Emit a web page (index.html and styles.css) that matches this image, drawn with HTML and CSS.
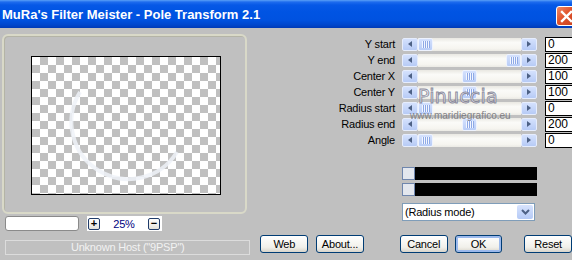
FILE: index.html
```html
<!DOCTYPE html>
<html lang="en">
<head>
    <meta charset="UTF-8">
    <title>MuRa's Filter Meister - Pole Transform 2.1</title>
    <link rel="stylesheet" href="styles.css">
</head>
<body>

    <div class="titlebar">
        <span class="title">MuRa's Filter Meister - Pole Transform 2.1</span>
        <span class="close-btn">
            <svg width="19" height="19" viewBox="0 0 19 19"><path d="M5 5 L14 14 M14 5 L5 14" stroke="#fff" stroke-width="2.4" stroke-linecap="square"/></svg>
        </span>
    </div>

    <div class="main">
        <div class="left">
            <div class="preview-frame">
                <div class="canvas">
                    <svg class="ghost" width="188" height="137" viewBox="0 0 188 137">
                        <path d="M48 35 A57 57 0 1 0 145 95" fill="none" stroke="#eef2f8" stroke-width="4" opacity="0.85"/>
                    </svg>
                </div>
            </div>
            <div class="zoom-row">
                <input class="zoom-field" type="text">
                <div class="zoom-box">
                    <span class="mini-btn">+</span>
                    <span class="zoom-value">25%</span>
                    <span class="mini-btn">&minus;</span>
                </div>
            </div>
        </div>

        <div class="right">
            <div class="sliders">
                <label>Y start</label>
                <div class="slider"><span class="arrow arrow-left"></span><span class="track"><span class="thumb" style="--pos: 0"></span></span><span class="arrow arrow-right"></span></div>
                <div class="value">0</div>

                <label>Y end</label>
                <div class="slider"><span class="arrow arrow-left"></span><span class="track"><span class="thumb" style="--pos: 1"></span></span><span class="arrow arrow-right"></span></div>
                <div class="value">200</div>

                <label>Center X</label>
                <div class="slider"><span class="arrow arrow-left"></span><span class="track"><span class="thumb" style="--pos: 0.5"></span></span><span class="arrow arrow-right"></span></div>
                <div class="value">100</div>

                <label>Center Y</label>
                <div class="slider"><span class="arrow arrow-left"></span><span class="track"><span class="thumb" style="--pos: 0.5"></span></span><span class="arrow arrow-right"></span></div>
                <div class="value">100</div>

                <label>Radius start</label>
                <div class="slider"><span class="arrow arrow-left"></span><span class="track"><span class="thumb" style="--pos: 0"></span></span><span class="arrow arrow-right"></span></div>
                <div class="value">0</div>

                <label>Radius end</label>
                <div class="slider"><span class="arrow arrow-left"></span><span class="track"><span class="thumb" style="--pos: 0.5"></span></span><span class="arrow arrow-right"></span></div>
                <div class="value">200</div>

                <label>Angle</label>
                <div class="slider"><span class="arrow arrow-left"></span><span class="track"><span class="thumb" style="--pos: 0"></span></span><span class="arrow arrow-right"></span></div>
                <div class="value">0</div>
            </div>

            <div class="colors">
                <div class="color-bar"><span class="swatch"></span></div>
                <div class="color-bar"><span class="swatch"></span></div>
            </div>

            <div class="select">
                <span class="select-text">(Radius mode)</span>
                <span class="select-btn">
                    <svg width="9" height="6" viewBox="0 0 9 6"><path d="M1 1 L4.5 4.5 L8 1" fill="none" stroke="#4d6185" stroke-width="2"/></svg>
                </span>
            </div>

            <div class="watermark">
                <span class="wm-name">Pinuccia</span>
                <span class="wm-url">www.maridiegrafico.eu</span>
            </div>
        </div>
    </div>

    <div class="bottom">
        <div class="status">Unknown Host ("9PSP")</div>
        <button class="btn btn-web">Web</button>
        <button class="btn btn-about">About...</button>
        <button class="btn btn-cancel">Cancel</button>
        <button class="btn btn-ok">OK</button>
        <button class="btn btn-reset">Reset</button>
    </div>

</body>
</html>
```

FILE: styles.css
```css
body {
    margin: 0;
    width: 572px;
    height: 260px;
    overflow: hidden;
    background-color: #c0c0c0;
    font-family: "Liberation Sans", Arial, sans-serif;
    font-size: 11px;
    color: #000;
}

/* title bar */
.titlebar {
    height: 28px;
    display: flex;
    align-items: flex-start;
    padding-left: 2px;
    background: linear-gradient(#5aa0f7 0, #1e6cee 2px, #0658e6 5px, #0054e3 12px, #0052e0 20px, #0046cc 25px, #003ab6 28px);
    color: #fff;
}
.title {
    font-size: 13px;
    font-weight: bold;
    margin-top: 7px;
}
.close-btn {
    margin-left: auto;
    margin-right: -5px;
    margin-top: 6px;
    width: 21px;
    height: 20px;
    box-sizing: border-box;
    border: 1px solid #fff;
    border-radius: 3px;
    background: linear-gradient(135deg, #f08a66, #e0532c 45%, #c8401c);
    display: flex;
    align-items: center;
    justify-content: center;
}

.main {
    display: flex;
    height: 204px;
}

/* left side: preview */
.left {
    width: 250px;
    padding-left: 2px;
    box-sizing: border-box;
}
.preview-frame {
    margin-top: 6px;
    width: 245px;
    height: 180px;
    box-sizing: border-box;
    border: 2px solid #d9d9c8;
    border-radius: 6px;
    box-shadow: inset 1px 1px 0 #b4b4a6;
    padding: 20px 0 0 27px;
}
.canvas {
    position: relative;
    width: 188px;
    height: 137px;
    border: 1px solid #000;
    background: conic-gradient(#c0c0c0 0 25%, #fff 0 50%, #c0c0c0 0 75%, #fff 0) 0 0 / 16px 16px;
}
.ghost {
    position: absolute;
    left: 0;
    top: 0;
}
.zoom-row {
    margin-top: 2px;
    display: flex;
    align-items: center;
}
.zoom-field {
    margin: 0 0 0 3px;
    width: 74px;
    height: 15px;
    box-sizing: border-box;
    border: 1px solid #8a8a8a;
    border-radius: 3px;
    background: #fff;
    padding: 0;
}
.zoom-box {
    margin-left: 8px;
    width: 75px;
    height: 15px;
    background: #fff;
    display: flex;
    align-items: center;
    padding-left: 1px;
    box-sizing: border-box;
}
.mini-btn {
    width: 12px;
    height: 12px;
    box-sizing: border-box;
    border: 1px solid #1f3b6a;
    border-radius: 2px;
    background: linear-gradient(#fff, #e4e3dc);
    font-size: 11px;
    font-weight: bold;
    line-height: 9px;
    text-align: center;
}
.zoom-value {
    width: 48px;
    text-align: center;
    color: #000080;
    letter-spacing: -0.2px;
}

/* right side: sliders */
.right {
    flex: 1;
    position: relative;
    padding-top: 8px;
}
.sliders {
    display: grid;
    grid-template-columns: 152px 143px 1fr;
    grid-auto-rows: 16px;
    align-items: center;
}
.sliders label {
    text-align: right;
    padding-right: 7px;
    white-space: nowrap;
    letter-spacing: -0.2px;
}
.slider {
    width: 135px;
    height: 13px;
    display: flex;
}
.arrow {
    width: 16px;
    height: 13px;
    box-sizing: border-box;
    border: 1px solid #e6edfd;
    border-radius: 2px;
    background: linear-gradient(#d4e1fd, #b7cbf6);
    display: flex;
    align-items: center;
    justify-content: center;
}
.arrow::before {
    content: "";
    border-style: solid;
}
.arrow-left::before {
    border-width: 3.5px 4px 3.5px 0;
    border-color: transparent #4d6185 transparent transparent;
}
.arrow-right::before {
    border-width: 3.5px 0 3.5px 4px;
    border-color: transparent transparent transparent #4d6185;
}
.track {
    flex: 1;
    position: relative;
    background: linear-gradient(#e9e8e2, #fbfbf8 35%, #f6f5f0 80%, #ebeae4);
}
.thumb {
    position: absolute;
    top: 0;
    left: calc((100% - 15px) * var(--pos));
    width: 15px;
    height: 13px;
    box-sizing: border-box;
    border: 1px solid #eef3fe;
    border-radius: 2px;
    background: repeating-linear-gradient(90deg, #f2f6ff 0 1px, #8ea9e6 1px 2px) center / 8px 7px no-repeat, linear-gradient(#d4e1fd, #b9cdf7);
}
.value {
    height: 15px;
    box-sizing: border-box;
    border: 1px solid #000;
    border-right: none;
    background: #fff;
    padding-left: 2px;
    line-height: 13px;
    font-size: 12px;
}

.colors {
    margin: 19px 0 0 152px;
}
.color-bar {
    width: 135px;
    height: 13px;
    background: #000;
    display: flex;
}
.color-bar + .color-bar {
    margin-top: 3px;
}
.swatch {
    width: 13px;
    height: 13px;
    box-sizing: border-box;
    border: 1px solid #6f86ad;
    background: #e3e7ee;
}

.select {
    margin: 7px 0 0 152px;
    width: 133px;
    height: 18px;
    box-sizing: border-box;
    border: 1px solid #7f9db9;
    background: #fff;
    display: flex;
    align-items: center;
}
.select-text {
    padding-left: 2px;
    letter-spacing: -0.2px;
}
.select-btn {
    margin-left: auto;
    margin-right: 1px;
    width: 16px;
    height: 14px;
    border-radius: 2px;
    background: linear-gradient(#d7e3fd, #b5caf6);
    display: flex;
    align-items: center;
    justify-content: center;
}

/* watermark over the sliders */
.watermark {
    position: absolute;
    left: 160px;
    top: 57px;
    width: 120px;
}
.wm-name {
    display: block;
    margin-left: 8px;
    font-family: "DejaVu Sans", sans-serif;
    font-size: 19px;
    line-height: 23px;
    color: rgba(228, 228, 238, 0.85);
    -webkit-text-stroke: 0.9px rgba(115, 115, 135, 0.8);
    letter-spacing: 0.2px;
}
.wm-url {
    display: block;
    margin-top: 2px;
    font-size: 10px;
    line-height: 11px;
    color: rgba(105, 105, 110, 0.8);
}

/* bottom row */
.bottom {
    display: flex;
    align-items: flex-start;
    padding-top: 3px;
}
.status {
    margin: 5px 0 0 5px;
    width: 247px;
    height: 15px;
    box-sizing: border-box;
    border: 1px solid #dcdcdc;
    color: #f2f2f2;
    text-align: center;
    line-height: 13px;
    letter-spacing: -0.2px;
}
.btn {
    width: 48px;
    height: 18px;
    box-sizing: border-box;
    padding: 0;
    border: 1px solid #003c74;
    border-radius: 3px;
    background: linear-gradient(#ffffff, #f1f0ea 70%, #d8d4ca);
    font-family: "Liberation Sans", Arial, sans-serif;
    font-size: 11px;
    color: #000;
    letter-spacing: -0.2px;
}
.btn-web {
    margin-left: 10px;
}
.btn-about {
    margin-left: 8px;
}
.btn-cancel {
    margin-left: 36px;
}
.btn-ok {
    margin-left: 7px;
    box-shadow: inset 0 0 0 2px #9bb9ec;
}
.btn-reset {
    margin-left: 22px;
}
```
